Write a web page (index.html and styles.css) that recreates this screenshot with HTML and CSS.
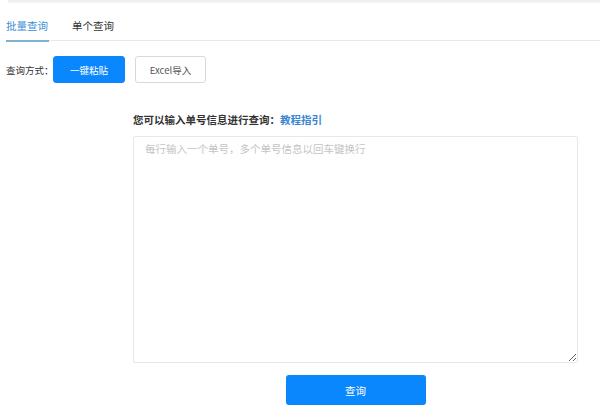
FILE: index.html
```html
<!DOCTYPE html>
<html lang="zh-CN">
<head>
<meta charset="utf-8">
<title>批量查询</title>
<link rel="stylesheet" href="styles.css">
</head>
<body>
<div class="topbar"></div>
<div class="tabs">
  <div class="tab active">批量查询</div>
  <div class="tab">单个查询</div>
</div>
<div class="method">
  <span class="method-label">查询方式：</span>
  <button class="btn btn-primary">一键粘贴</button>
  <button class="btn btn-default">Excel导入</button>
</div>
<div class="content">
  <div class="heading">您可以输入单号信息进行查询：<a class="link">教程指引</a></div>
  <textarea class="input" placeholder="每行输入一个单号，多个单号信息以回车键换行"></textarea>
  <div class="submit-row"><button class="btn-submit">查询</button></div>
</div>
</body>
</html>
```

FILE: styles.css
```css
html, body {
  margin: 0;
  padding: 0;
  background: #fff;
  font-family: "Noto Sans CJK SC", "Noto Sans", sans-serif;
  color: #333;
}
.topbar {
  margin-left: 8px;
  height: 3px;
  background: linear-gradient(#ededed, #f7f7f7);
}
.tabs {
  display: flex;
  gap: 24px;
  margin-left: 6px;
  border-bottom: 1px solid #e8e8e8;
  height: 38px;
  box-sizing: border-box;
}
.tab {
  font-size: 10.5px;
  line-height: 14px;
  padding-top: 16px;
  color: #333;
  position: relative;
}
.tab.active {
  color: #3d8fd6;
}
.tab.active::after {
  content: "";
  position: absolute;
  left: 0;
  right: -1px;
  bottom: -2px;
  height: 2px;
  background: #7fb2d1;
}
.method {
  display: flex;
  align-items: center;
  margin-top: 15px;
  margin-left: 6px;
}
.method-label {
  font-size: 9.5px;
  color: #333;
  width: 47px;
  flex-shrink: 0;
  white-space: nowrap;
}
.btn {
  height: 27px;
  border-radius: 3px;
  font-family: inherit;
  font-size: 9.5px;
  padding: 0;
  cursor: pointer;
}
.btn-primary {
  width: 72px;
  background: #0b87fe;
  border: 1px solid #0b87fe;
  color: #fff;
}
.btn-default {
  width: 71px;
  margin-left: 10px;
  background: #fff;
  border: 1px solid #d9d9d9;
  color: #555;
}
.content {
  margin-left: 133px;
  width: 445px;
  margin-top: 30px;
}
.heading {
  font-size: 10.5px;
  font-weight: bold;
  color: #333;
  line-height: 14px;
}
.link {
  color: #3a86d2;
  font-weight: bold;
}
.input {
  display: block;
  box-sizing: border-box;
  width: 445px;
  height: 227px;
  margin-top: 9px;
  border: 1px solid #e8e8e8;
  border-radius: 2px;
  padding: 5px 11px;
  font-family: inherit;
  font-size: 10.5px;
  line-height: 14px;
  resize: vertical;
  outline: none;
}
.input::placeholder {
  color: #c4c4c4;
}
.submit-row {
  display: flex;
  justify-content: center;
  margin-top: 12px;
}
.btn-submit {
  width: 140px;
  height: 30px;
  background: #0b87fe;
  border: none;
  border-radius: 3px;
  color: #fff;
  font-family: inherit;
  font-size: 10.5px;
  cursor: pointer;
}
```
